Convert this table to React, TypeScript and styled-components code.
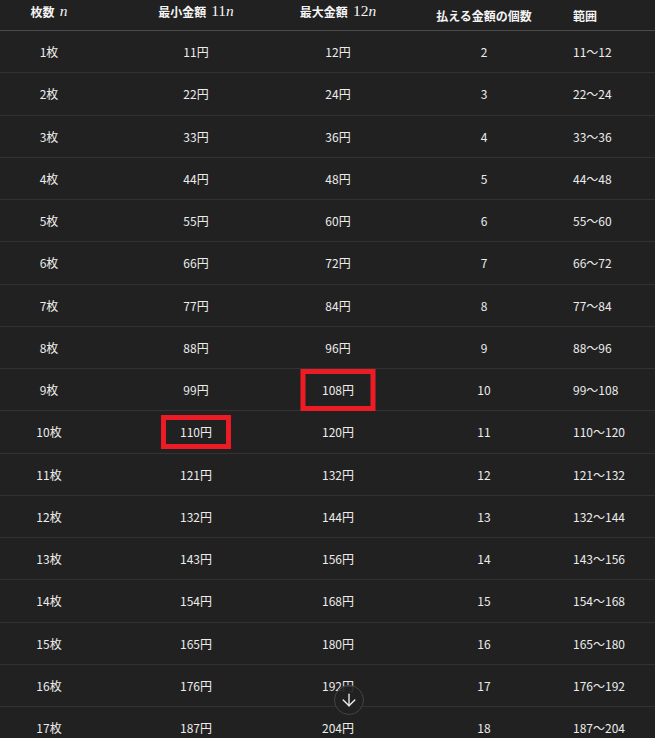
import styled, { createGlobalStyle } from 'styled-components';
import { ArrowDown } from 'lucide-react';

const GlobalStyle = createGlobalStyle`
  html, body {
    margin: 0;
    background: #212121;
    overflow: hidden;
  }
  body {
    font-family: "Noto Sans CJK JP", "Noto Sans", sans-serif;
    color: #ececec;
  }
`;

const COLUMNS = '98px 196px 106px 168px 87px';

const Table = styled.div`
  width: 655px;
  display: flex;
  flex-direction: column;
`;

const HeadRow = styled.div`
  display: grid;
  grid-template-columns: ${COLUMNS};
  height: 31px;
  box-sizing: border-box;
  border-bottom: 1px solid #4b4b4b;
`;

const Row = styled.div`
  display: grid;
  grid-template-columns: ${COLUMNS};
  height: 42.25px;
  box-sizing: border-box;
  border-bottom: 1px solid #323232;
`;

type CellProps = { $align?: 'center' | 'left'; $padRight?: number; $padLeft?: number };

const HeadCell = styled.div<CellProps & { $raised?: boolean }>`
  display: flex;
  align-items: center;
  justify-content: ${(p) => (p.$align === 'left' ? 'flex-start' : 'center')};
  padding-right: ${(p) => p.$padRight ?? 0}px;
  padding-left: ${(p) => p.$padLeft ?? 0}px;
  padding-bottom: ${(p) => (p.$raised ? 8 : 0)}px;
  font-size: 12px;
  font-weight: 700;
  color: #f4f4f4;
  white-space: nowrap;
`;

const Cell = styled.div<CellProps>`
  display: flex;
  align-items: center;
  justify-content: ${(p) => (p.$align === 'left' ? 'flex-start' : 'center')};
  padding-right: ${(p) => p.$padRight ?? 0}px;
  padding-left: ${(p) => p.$padLeft ?? 0}px;
  font-size: 12px;
  color: #ececec;
  white-space: nowrap;
`;

const Value = styled.span`
  position: relative;
`;

const Math = styled.span`
  font-family: "Liberation Serif", "DejaVu Serif", serif;
  font-size: 15.5px;
  font-weight: 400;
  margin-left: 5px;
`;

const Var = styled.i`
  font-style: italic;
`;

const Mark = styled.span<{ $w: number; $h: number }>`
  position: absolute;
  left: 50%;
  top: 50%;
  width: ${(p) => p.$w}px;
  height: ${(p) => p.$h}px;
  transform: translate(-50%, -50%);
  border: 5px solid #ed1c24;
  box-sizing: border-box;
  pointer-events: none;
`;

const ScrollButton = styled.button`
  position: fixed;
  left: 334px;
  top: 685px;
  width: 30px;
  height: 30px;
  border-radius: 50%;
  border: 1px solid #454545;
  background: rgba(33, 33, 33, 0.9);
  color: #f0f0f0;
  display: flex;
  align-items: center;
  justify-content: center;
  padding: 0;
`;

const rows = Array.from({ length: 17 }, (_, i) => i + 1);

export default function App() {
  return (
    <>
      <GlobalStyle />
      <Table>
        <HeadRow>
          <HeadCell $raised>
            枚数<Math><Var>n</Var></Math>
          </HeadCell>
          <HeadCell $raised>
            最小金額<Math>11<Var>n</Var></Math>
          </HeadCell>
          <HeadCell $raised $padRight={18}>
            最大金額<Math>12<Var>n</Var></Math>
          </HeadCell>
          <HeadCell>払える金額の個数</HeadCell>
          <HeadCell $align="left" $padLeft={5}>範囲</HeadCell>
        </HeadRow>
        {rows.map((n) => (
          <Row key={n}>
            <Cell>{n}枚</Cell>
            <Cell>
              <Value>
                {11 * n}円
                {n === 10 && <Mark $w={70} $h={34} />}
              </Value>
            </Cell>
            <Cell $padRight={18}>
              <Value>
                {12 * n}円
                {n === 9 && <Mark $w={75} $h={42} />}
              </Value>
            </Cell>
            <Cell>{n + 1}</Cell>
            <Cell $align="left" $padLeft={5}>
              {11 * n}〜{12 * n}
            </Cell>
          </Row>
        ))}
      </Table>
      <ScrollButton aria-label="scroll down">
        <ArrowDown size={20} strokeWidth={1.6} />
      </ScrollButton>
    </>
  );
}
